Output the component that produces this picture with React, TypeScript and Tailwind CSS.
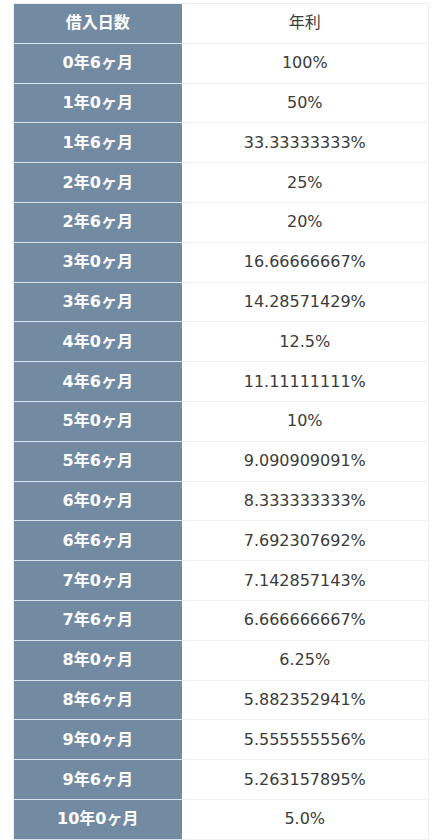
const rows: [string, string][] = [
  ["0年6ヶ月", "100%"],
  ["1年0ヶ月", "50%"],
  ["1年6ヶ月", "33.33333333%"],
  ["2年0ヶ月", "25%"],
  ["2年6ヶ月", "20%"],
  ["3年0ヶ月", "16.66666667%"],
  ["3年6ヶ月", "14.28571429%"],
  ["4年0ヶ月", "12.5%"],
  ["4年6ヶ月", "11.11111111%"],
  ["5年0ヶ月", "10%"],
  ["5年6ヶ月", "9.090909091%"],
  ["6年0ヶ月", "8.333333333%"],
  ["6年6ヶ月", "7.692307692%"],
  ["7年0ヶ月", "7.142857143%"],
  ["7年6ヶ月", "6.666666667%"],
  ["8年0ヶ月", "6.25%"],
  ["8年6ヶ月", "5.882352941%"],
  ["9年0ヶ月", "5.555555556%"],
  ["9年6ヶ月", "5.263157895%"],
  ["10年0ヶ月", "5.0%"],
];

export default function App() {
  return (
    <div className="bg-white w-[441px] h-[840px] overflow-hidden pt-[3px] pl-[13px] font-['DejaVu_Sans','Noto_Sans_CJK_JP',sans-serif]">
      <table className="w-[416px] border-collapse border border-[#eeeeee] text-[16px]">
        <tbody>
          <tr className="h-[39.8px]">
            <th className="w-[168px] bg-[#738ba2] text-white font-bold border-b border-[#dde5ec] p-0">
              借入日数
            </th>
            <td className="text-center text-[#3b3b3b] border-b border-[#f1f1f1] p-0">
              年利
            </td>
          </tr>
          {rows.map(([term, rate]) => (
            <tr key={term} className="h-[39.8px]">
              <th className="bg-[#738ba2] text-white font-bold border-b border-[#dde5ec] p-0">
                {term}
              </th>
              <td className="text-center text-[#3b3b3b] border-b border-[#f1f1f1] p-0">
                {rate}
              </td>
            </tr>
          ))}
        </tbody>
      </table>
    </div>
  );
}
